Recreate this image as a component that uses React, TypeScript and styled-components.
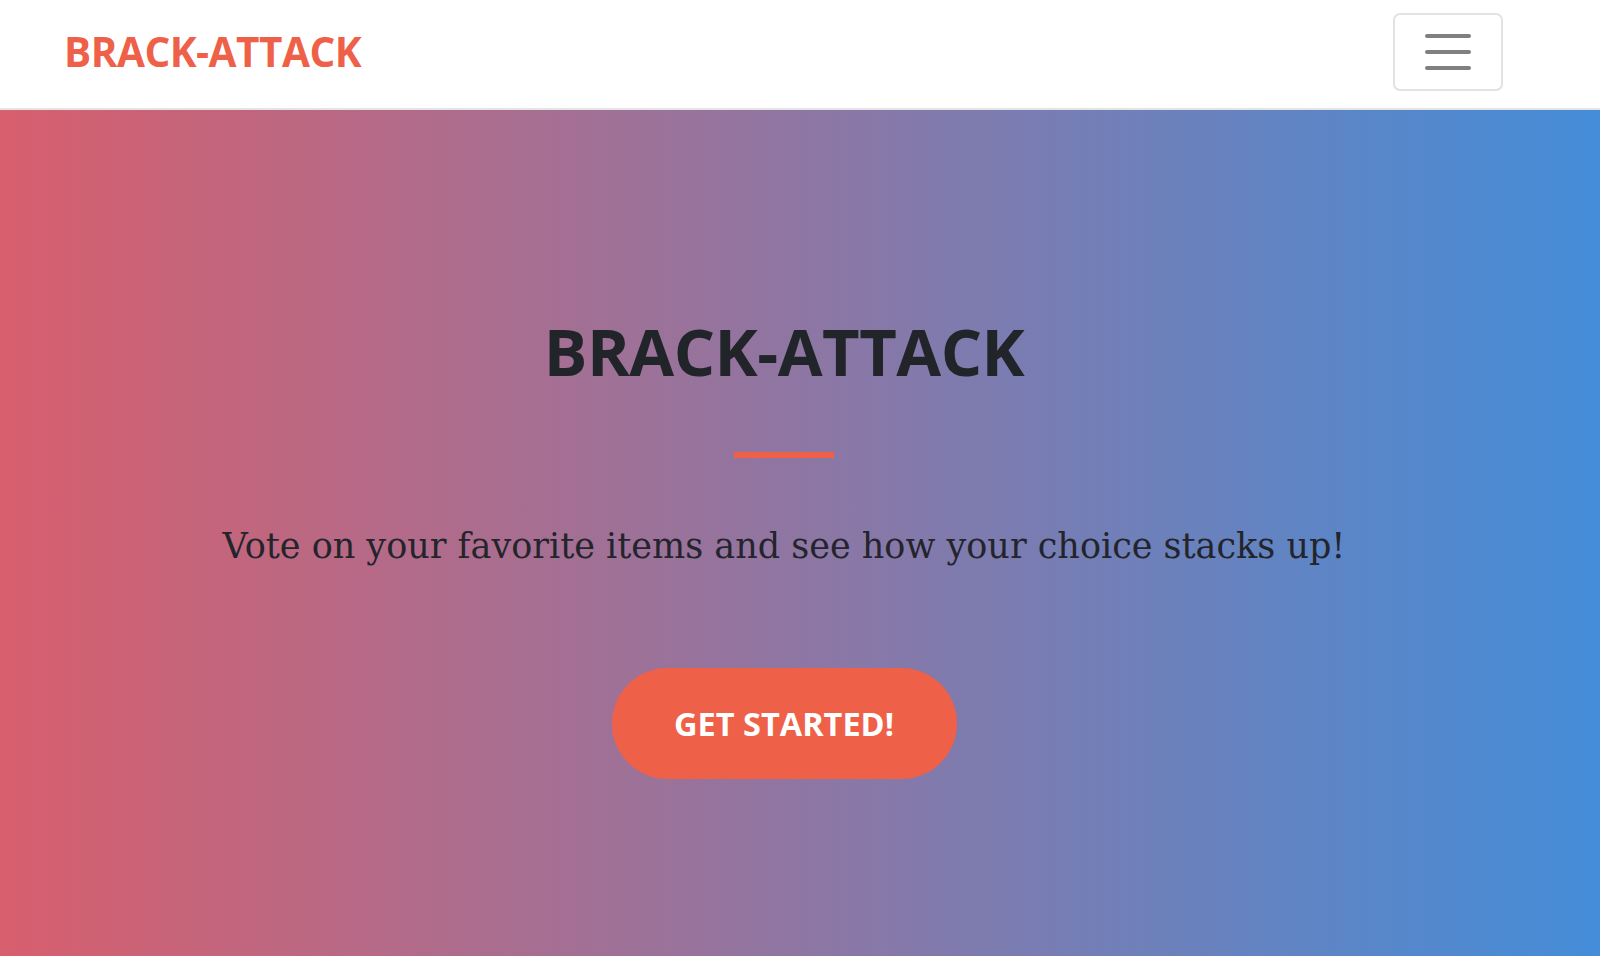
import React from "react";
import styled, { createGlobalStyle } from "styled-components";

const GlobalStyle = createGlobalStyle`
  html, body {
    margin: 0;
    padding: 0;
    height: 100%;
  }
  body {
    font-family: "Open Sans", "Liberation Sans", sans-serif;
    background: #ffffff;
    overflow: hidden;
  }
  #root {
    min-height: 100%;
  }
  * { box-sizing: border-box; }
`;

const Page = styled.div`
  display: flex;
  flex-direction: column;
  height: 956px;
`;

const Navbar = styled.nav`
  display: flex;
  align-items: center;
  justify-content: space-between;
  height: 110px;
  padding: 13px 97px 17px 64px;
  background: #ffffff;
  border-bottom: 2px solid #e4e4e4;
  flex-shrink: 0;
`;

const Brand = styled.a`
  font-family: "Open Sans", "Liberation Sans", sans-serif;
  font-weight: 700;
  font-size: 40.5px;
  line-height: 1;
  color: #ee6148;
  text-decoration: none;
  letter-spacing: -0.5px;
`;

const Toggler = styled.button`
  width: 110px;
  height: 78px;
  border: 2px solid #e2e2e2;
  border-radius: 7px;
  background: transparent;
  display: flex;
  flex-direction: column;
  align-items: center;
  justify-content: center;
  gap: 12px;
  padding: 0;
`;

const Bar = styled.span`
  display: block;
  width: 46px;
  height: 4px;
  border-radius: 2px;
  background: #808080;
`;

const Hero = styled.header`
  flex: 1;
  display: flex;
  flex-direction: column;
  align-items: center;
  padding: 202px 32px 0 0;
  background: linear-gradient(to right, #d85f6e, #448dd8);
`;

const Title = styled.h1`
  margin: 0;
  font-family: "Open Sans", "Liberation Sans", sans-serif;
  font-weight: 700;
  font-size: 65px;
  line-height: 1.2;
  color: #212529;
  letter-spacing: -0.5px;
`;

const Divider = styled.hr`
  width: 100px;
  height: 6px;
  margin: 62px 0 0;
  border: 0;
  background: #ee6148;
  opacity: 1;
`;

const Lead = styled.p`
  margin: 62px 0 0;
  font-family: "DejaVu Serif", "Liberation Serif", serif;
  font-size: 35px;
  line-height: 1.5;
  color: #24242c;
`;

const CTA = styled.a`
  margin-top: 95px;
  display: inline-flex;
  align-items: center;
  justify-content: center;
  width: 345px;
  height: 111px;
  border-radius: 56px;
  background: #ee6148;
  color: #ffffff;
  font-family: "Open Sans", "Liberation Sans", sans-serif;
  font-weight: 700;
  font-size: 32.5px;
  text-transform: uppercase;
  text-decoration: none;
`;

export default function App() {
  return (
    <>
      <GlobalStyle />
      <Page>
        <Navbar>
          <Brand href="#">BRACK-ATTACK</Brand>
          <Toggler aria-label="Toggle navigation">
            <Bar />
            <Bar />
            <Bar />
          </Toggler>
        </Navbar>
        <Hero>
          <Title>BRACK-ATTACK</Title>
          <Divider />
          <Lead>Vote on your favorite items and see how your choice stacks up!</Lead>
          <CTA href="#">Get Started!</CTA>
        </Hero>
      </Page>
    </>
  );
}
